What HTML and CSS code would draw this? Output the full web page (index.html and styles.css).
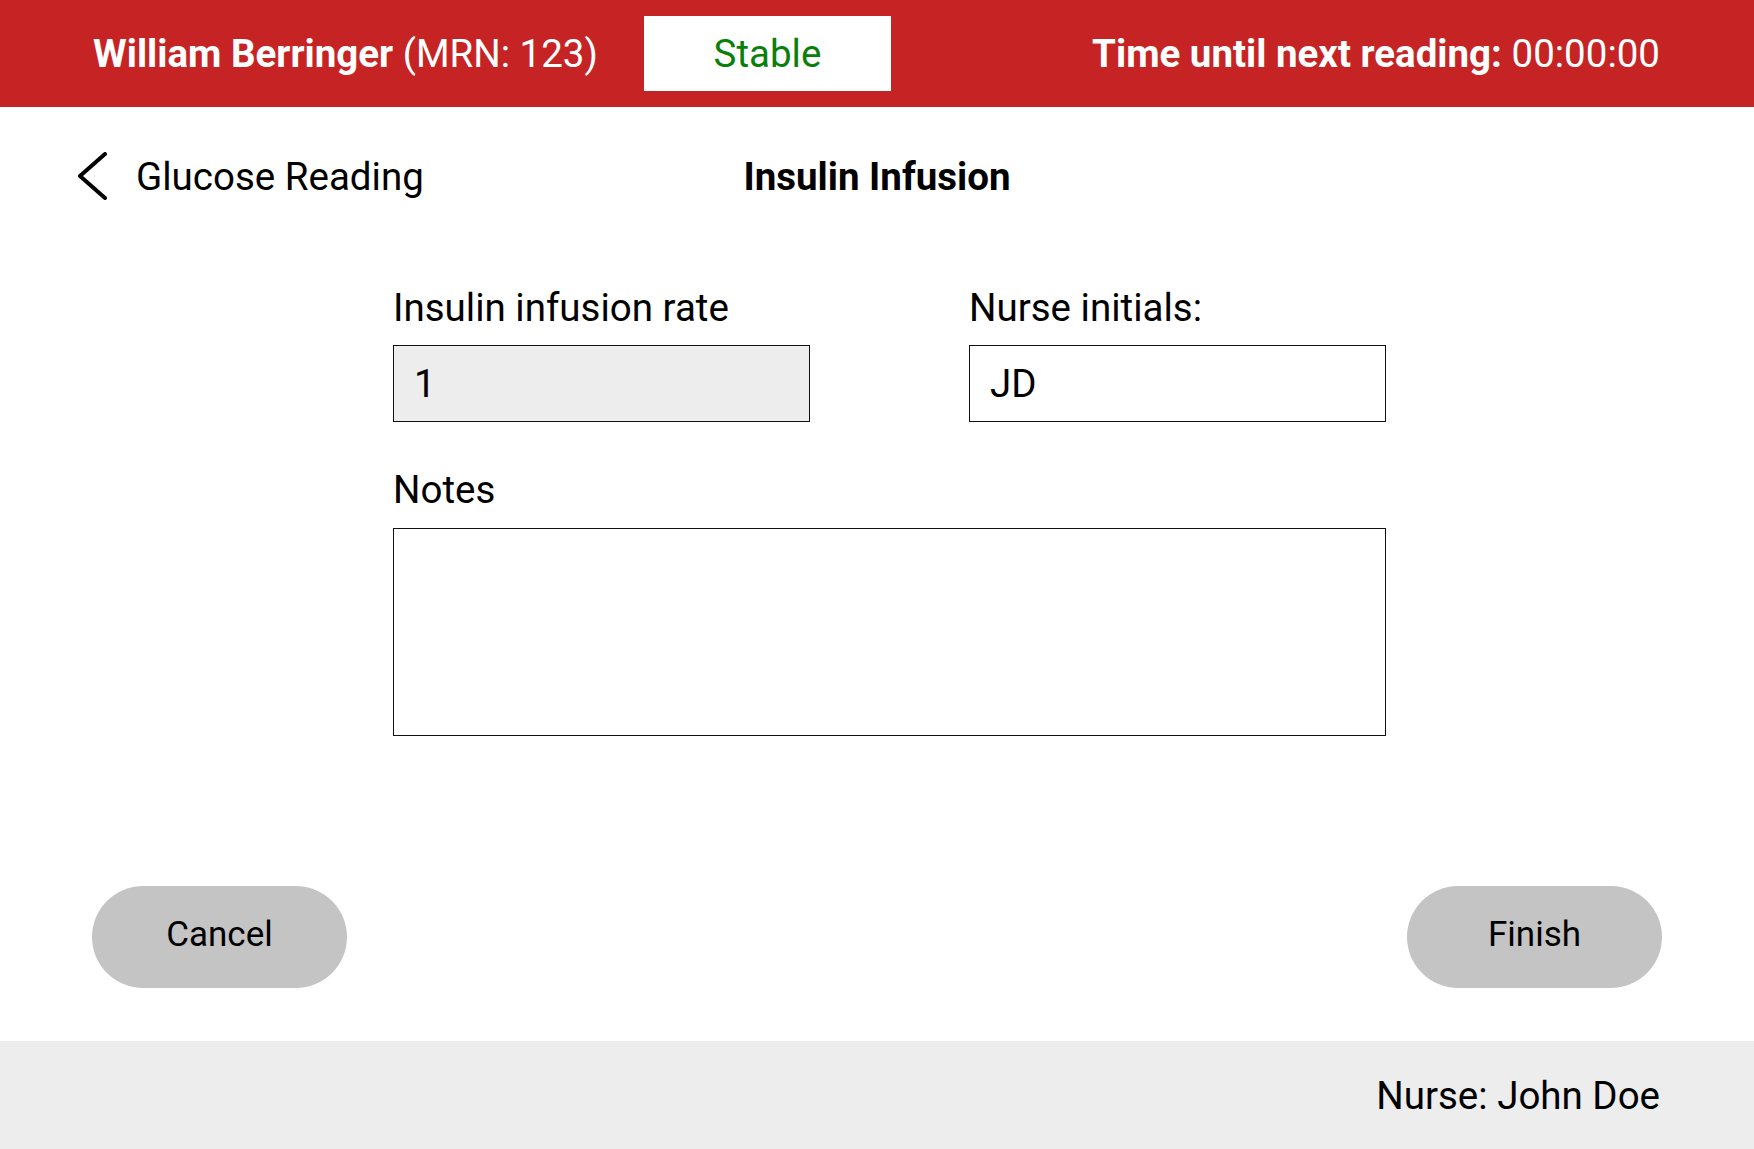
FILE: index.html
```html
<!DOCTYPE html>
<html lang="en">
<head>
<meta charset="utf-8">
<title>Insulin Infusion</title>
<link rel="stylesheet" href="styles.css">
</head>
<body>
<div class="app">
  <header class="topbar">
    <div class="patient"><strong>William Berringer</strong> (MRN: 123)</div>
    <div class="status">Stable</div>
    <div class="timer"><strong>Time until next reading:</strong> 00:00:00</div>
  </header>
  <main class="main">
    <nav class="nav">
      <a class="back" href="#">
        <svg class="chevron" width="32" height="48" viewBox="0 0 32 48" aria-hidden="true">
          <polyline points="28,2 3,24 28,46" fill="none" stroke="#000" stroke-width="4" stroke-linecap="round" stroke-linejoin="round"/>
        </svg>
        <span>Glucose Reading</span>
      </a>
      <h1 class="title">Insulin Infusion</h1>
      <div></div>
    </nav>
    <form class="form">
      <div class="row">
        <div class="field">
          <label class="label">Insulin infusion rate</label>
          <div class="input input-readonly">1</div>
        </div>
        <div class="field">
          <label class="label">Nurse initials:</label>
          <div class="input">JD</div>
        </div>
      </div>
      <div class="field notes-field">
        <label class="label">Notes</label>
        <div class="textarea"></div>
      </div>
    </form>
    <div class="actions">
      <button class="btn" type="button">Cancel</button>
      <button class="btn" type="button">Finish</button>
    </div>
  </main>
  <footer class="footer">Nurse: John Doe</footer>
</div>
</body>
</html>
```

FILE: styles.css
```css
* { box-sizing: border-box; }
html, body { margin: 0; padding: 0; }
body {
  font-family: Roboto, "Noto Sans", Arial, sans-serif;
  color: #000;
  background: #fff;
}
.app {
  display: flex;
  flex-direction: column;
  height: 1149px;
}
.topbar {
  height: 107px;
  flex: none;
  background: #c62424;
  color: #fff;
  display: flex;
  align-items: center;
  padding: 0 94px 0 93px;
  font-size: 38.5px;
}
.topbar strong { font-weight: 700; }
.status {
  margin-left: 46px;
  width: 247px;
  height: 75px;
  background: #fff;
  color: #0a800a;
  display: flex;
  align-items: center;
  justify-content: center;
}
.timer { margin-left: auto; }
.main {
  flex: 1;
  display: flex;
  flex-direction: column;
}
.nav {
  height: 138px;
  display: grid;
  grid-template-columns: 1fr auto 1fr;
  align-items: center;
}
.back {
  display: flex;
  align-items: center;
  gap: 27px;
  margin-left: 77px;
  color: #000;
  text-decoration: none;
  font-size: 38.5px;
}
.chevron { display: block; }
.title {
  margin: 0;
  font-size: 38.5px;
  font-weight: 700;
}
.form {
  margin: 42px 0 0 393px;
  width: 993px;
}
.row {
  display: grid;
  grid-template-columns: 417px 417px;
  column-gap: 159px;
}
.label {
  display: block;
  font-size: 38.5px;
  line-height: 42px;
  margin-bottom: 16px;
}
.input {
  height: 77px;
  border: 1px solid #111;
  display: flex;
  align-items: center;
  padding-left: 20px;
  font-size: 38.5px;
  background: #fff;
}
.input-readonly { background: #ededed; }
.notes-field { margin-top: 47px; }
.notes-field .label { margin-bottom: 17px; }
.textarea {
  height: 208px;
  border: 1px solid #111;
}
.actions {
  margin-top: auto;
  margin-bottom: 53px;
  display: flex;
  justify-content: space-between;
  padding: 0 92px;
}
.btn {
  width: 255px;
  height: 102px;
  border: none;
  border-radius: 51px;
  background: #c4c4c4;
  font-family: inherit;
  font-size: 35px;
  color: #000;
  padding: 0 0 6px;
}
.footer {
  height: 108px;
  flex: none;
  background: #ededed;
  display: flex;
  align-items: center;
  justify-content: flex-end;
  padding-right: 94px;
  font-size: 38.5px;
}
```
